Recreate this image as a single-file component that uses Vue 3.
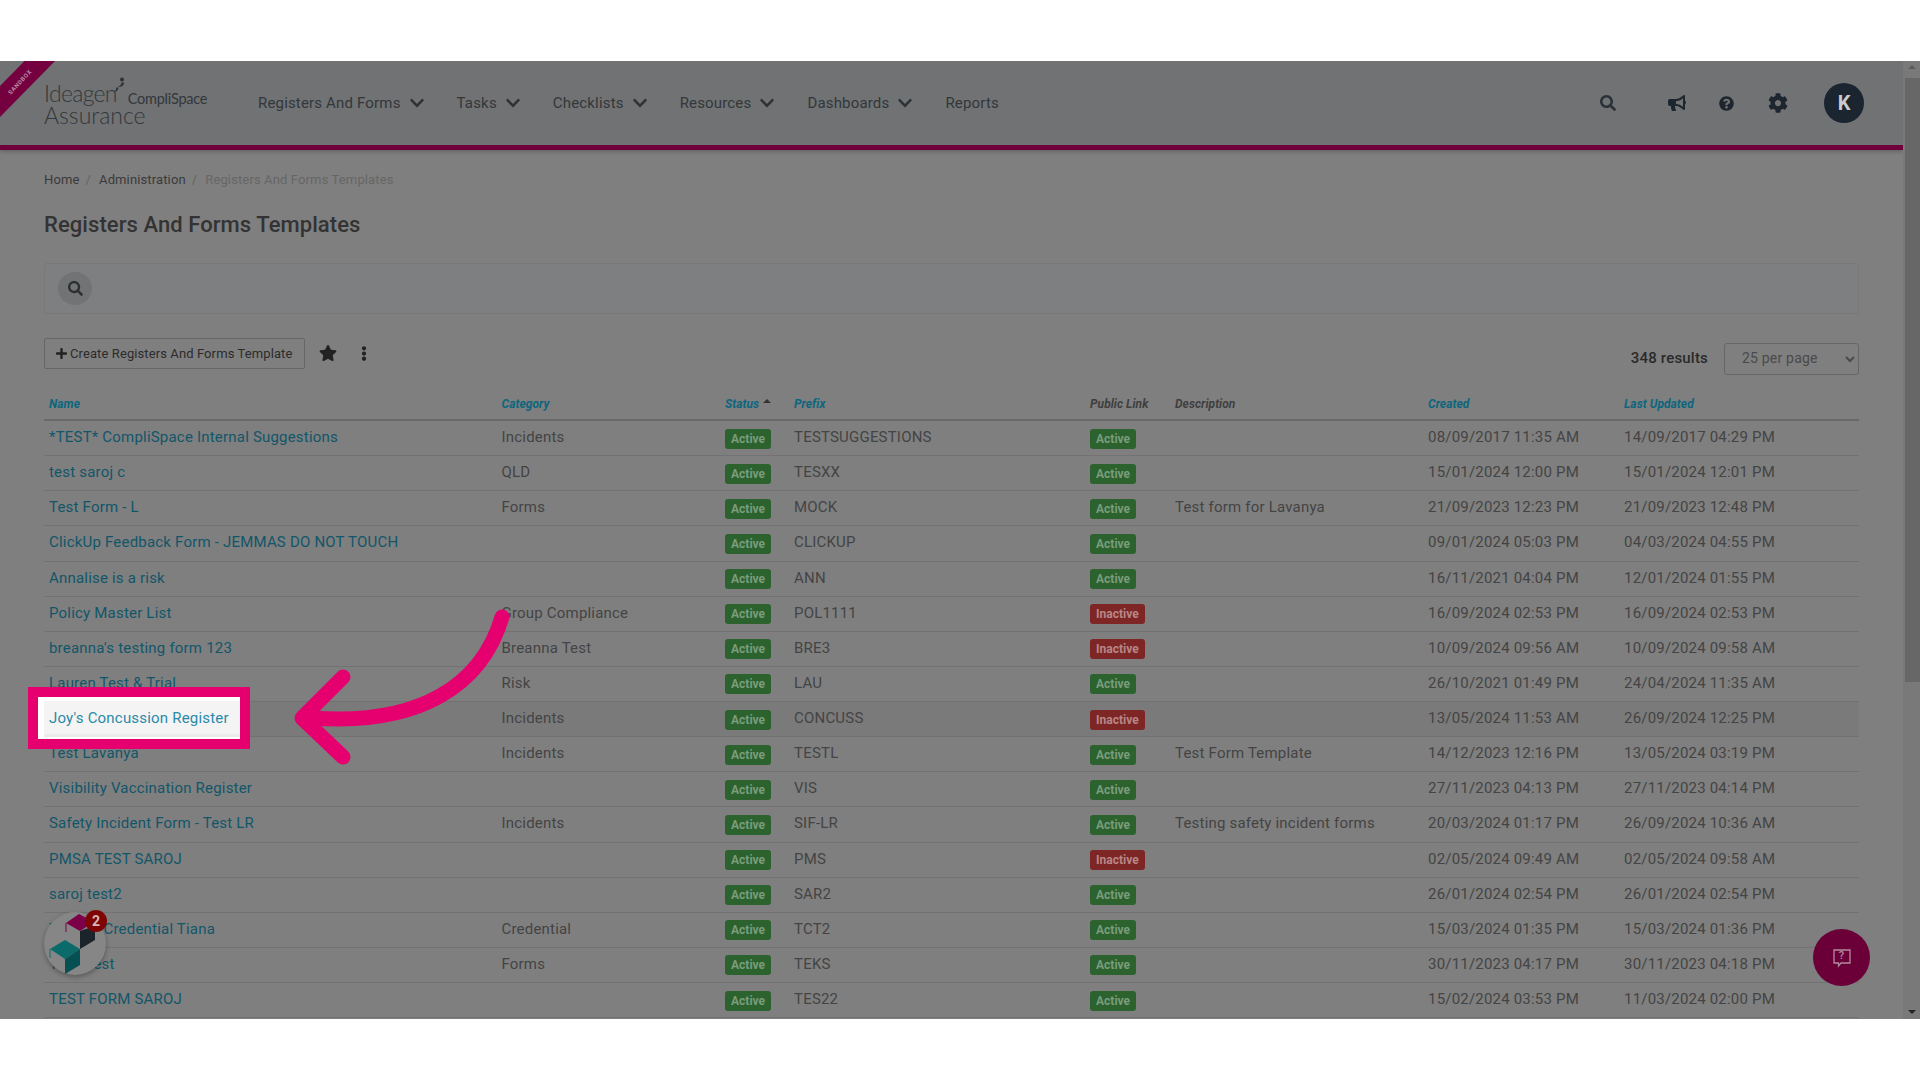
<template>
  <div class="stage">
    <div class="app">
      <div class="page">
        <header class="topbar">
          <svg class="ribbon" width="56" height="58" viewBox="0 0 56 58">
            <polygon points="24.5,0 55,0 0,56 0,25" fill="#75003f" />
            <text x="20" y="23" transform="rotate(-47 20 21)" text-anchor="middle" class="ribbon-text">SANDBOX</text>
          </svg>
          <div class="logo">
            <div class="logo-top">
              <span class="logo-ideagen">Ideagen</span>
              <svg class="logo-mark" width="12" height="16" viewBox="0 0 12 16">
                <circle cx="9" cy="2.500" r="2" fill="#2e3235" />
                <path d="M11 5.500 C11 9 8 10 5 10 C7 8.800 8.500 7.500 8.500 5.500 Z" fill="#2e3235" />
                <path d="M5.500 10.500 C5.500 13 3.500 15 1 15.500 C2.500 14 3.300 12.500 3.300 10.500 Z" fill="#2e3235" />
              </svg>
              <span class="logo-compli">CompliSpace</span>
            </div>
            <div class="logo-assurance">Assurance</div>
          </div>
          <nav class="nav">
            <a v-for="item in navItems" :key="item.label" class="nav-item">
              {{ item.label }}
              <svg v-if="item.menu" class="chev" viewBox="0 0 448 512"><path :d="icons.chevron" /></svg>
            </a>
          </nav>
          <div class="top-icons">
            <svg class="ic-search" viewBox="0 0 512 512"><path :d="icons.search" /></svg>
            <svg class="ic-horn" viewBox="0 0 576 512"><path :d="icons.bullhorn" /></svg>
            <svg class="ic-help" viewBox="0 0 512 512"><path :d="icons.question" /></svg>
            <svg class="ic-cog" viewBox="0 0 512 512"><path :d="icons.cog" /></svg>
            <div class="avatar">K</div>
          </div>
        </header>

        <main class="content">
          <div class="breadcrumb">
            <a>Home</a><span class="sep">/</span>
            <a>Administration</a><span class="sep">/</span>
            <span class="current">Registers And Forms Templates</span>
          </div>
          <h1>Registers And Forms Templates</h1>

          <div class="search-panel">
            <div class="search-btn">
              <svg viewBox="0 0 512 512"><path :d="icons.search" /></svg>
            </div>
          </div>

          <div class="toolbar">
            <button class="create-btn">
              <svg viewBox="0 0 448 512"><path :d="icons.plus" /></svg>
              Create Registers And Forms Template
            </button>
            <svg class="ic-star" viewBox="0 0 576 512"><path :d="icons.star" /></svg>
            <svg class="ic-dots" viewBox="0 0 192 512"><path :d="icons.dots" /></svg>
            <div class="results">
              <strong>348 results</strong>
              <select class="per-page">
                <option>25 per page</option>
              </select>
            </div>
          </div>

          <div class="table">
            <div class="row head">
              <a class="sort">Name</a>
              <a class="sort">Category</a>
              <a class="sort">Status<i class="caret"></i></a>
              <a class="sort">Prefix</a>
              <span>Public Link</span>
              <span>Description</span>
              <a class="sort">Created</a>
              <a class="sort">Last Updated</a>
            </div>
            <div v-for="(r, i) in rows" :key="r.prefix" class="row" :class="{ hovered: i === 8 }">
              <a class="name">{{ i === 8 ? '' : r.name }}</a>
              <span>{{ r.category }}</span>
              <div class="tag"><span class="badge">Active</span></div>
              <span>{{ r.prefix }}</span>
              <div class="tag"><span class="badge" :class="{ off: r.inactive }">{{ r.inactive ? 'Inactive' : 'Active' }}</span></div>
              <span>{{ r.description }}</span>
              <span>{{ r.created }}</span>
              <span>{{ r.updated }}</span>
            </div>
          </div>
        </main>
      </div>

      <div class="scrollbar">
        <i class="arrow up"></i>
        <div class="thumb"></div>
        <i class="arrow down"></i>
      </div>

      <div class="widget">
        <svg width="62" height="63" viewBox="0 0 62 63">
          <polygon points="22,11 35,2 50,10 36,19" fill="#7b0048" />
          <polygon points="36,19 51,14 51,28 36,37" fill="#1b232b" />
          <polygon points="6,37 21,28 36,37 21,47" fill="#0b6a6a" />
          <polygon points="21,47 36,37 36,53 21,62" fill="#064f52" />
          <path d="M22 11V20" stroke="#7b0048" />
          <path d="M6 37V46" stroke="#0b6a6a" />
        </svg>
        <span class="widget-badge">2</span>
      </div>

      <div class="help-fab">
        <svg width="20" height="20" viewBox="0 0 20 20">
          <path d="M2 2H18V15H9L6.500 18V15H2Z" fill="none" stroke="#b58aa0" stroke-width="1.300" />
        </svg>
        <span class="help-q">?</span>
      </div>

      <div class="spotlight">
        <div class="spot-row"><a>Joy's Concussion Register</a></div>
      </div>

      <svg class="pointer" width="1920" height="958" viewBox="0 61 1920 958">
        <path d="M502 617 C482 685 420 726 312 718" fill="none" stroke="#e6006f" stroke-width="15" stroke-linecap="round" />
        <path d="M343 677 L302 718 L343 757" fill="none" stroke="#e6006f" stroke-width="15" stroke-linecap="round" stroke-linejoin="round" />
      </svg>
    </div>
  </div>
</template>

<script setup>
const icons = {
  chevron: 'M207.029 381.476L12.686 187.132c-9.373-9.373-9.373-24.569 0-33.941l22.667-22.667c9.357-9.357 24.522-9.375 33.901-.04L224 284.505l154.745-154.021c9.379-9.335 24.544-9.317 33.901.04l22.667 22.667c9.373 9.373 9.373 24.569 0 33.941L240.971 381.476c-9.373 9.372-24.569 9.372-33.942 0z',
  search: 'M505 442.7L405.3 343c-4.5-4.5-10.6-7-17-7H372c27.6-35.3 44-79.7 44-128C416 93.1 322.9 0 208 0S0 93.1 0 208s93.1 208 208 208c48.3 0 92.7-16.4 128-44v16.3c0 6.4 2.5 12.5 7 17l99.7 99.7c9.4 9.4 24.6 9.4 33.9 0l28.3-28.3c9.4-9.4 9.4-24.6.1-34zM208 336c-70.7 0-128-57.2-128-128 0-70.7 57.2-128 128-128 70.7 0 128 57.2 128 128 0 70.7-57.2 128-128 128z',
  bullhorn: 'M576 240c0-23.63-12.95-44.04-32-55.12V32.01C544 23.26 537.02 0 512 0c-7.12 0-14.19 2.38-19.98 7.02l-85.03 68.03C364.28 109.19 310.66 128 256 128H64c-35.35 0-64 28.65-64 64v96c0 35.35 28.65 64 64 64h33.7c-1.39 10.48-2.18 21.14-2.18 32 0 39.77 9.26 77.35 25.56 110.94 5.19 10.69 16.52 17.06 28.4 17.06h74.28c26.05 0 41.69-29.84 25.9-50.56-16.4-21.52-26.15-48.36-26.15-77.44 0-11.11 1.62-21.79 4.41-32H256c54.66 0 108.28 18.81 150.98 52.95l85.03 68.03a32.023 32.023 0 0 0 19.98 7.02c24.92 0 32-22.78 32-32V295.13C563.05 284.04 576 263.63 576 240zm-96 141.42l-33.05-26.44C392.95 311.78 325.12 288 256 288v-96c69.12 0 136.95-23.78 190.95-66.98L480 98.58v282.84z',
  question: 'M504 256c0 136.997-111.043 248-248 248S8 392.997 8 256C8 119.083 119.043 8 256 8s248 111.083 248 248zM262.655 90c-54.497 0-89.255 22.957-116.549 63.758-3.536 5.286-2.353 12.415 2.715 16.258l34.699 26.31c5.205 3.947 12.621 3.008 16.665-2.122 17.864-22.658 30.113-35.797 57.303-35.797 20.429 0 45.698 13.148 45.698 32.958 0 14.976-12.363 22.667-32.534 33.976C247.128 238.528 216 254.941 216 296v4c0 6.627 5.373 12 12 12h56c6.627 0 12-5.373 12-12v-1.333c0-28.462 83.186-29.647 83.186-106.667 0-58.002-60.165-102-116.531-102zM256 338c-25.365 0-46 20.635-46 46 0 25.364 20.635 46 46 46s46-20.636 46-46c0-25.365-20.635-46-46-46z',
  cog: 'M487.4 315.7l-42.6-24.6c4.3-23.2 4.3-47 0-70.2l42.6-24.6c4.9-2.8 7.1-8.6 5.5-14-11.1-35.6-30-67.8-54.7-94.6-3.8-4.1-10-5.1-14.8-2.3L380.8 110c-17.9-15.4-38.5-27.3-60.8-35.1V25.8c0-5.6-3.9-10.5-9.4-11.7-36.7-8.2-74.3-7.8-109.2 0-5.5 1.2-9.4 6.1-9.4 11.7V75c-22.2 7.9-42.8 19.8-60.8 35.1L88.7 85.5c-4.9-2.8-11-1.9-14.8 2.3-24.7 26.7-43.6 58.9-54.7 94.6-1.7 5.4.6 11.2 5.5 14L67.3 221c-4.3 23.2-4.3 47 0 70.2l-42.6 24.6c-4.9 2.8-7.1 8.6-5.5 14 11.1 35.6 30 67.8 54.7 94.6 3.8 4.1 10 5.1 14.8 2.3l42.6-24.6c17.9 15.4 38.5 27.3 60.8 35.1v49.2c0 5.6 3.9 10.5 9.4 11.7 36.7 8.2 74.3 7.8 109.2 0 5.5-1.2 9.4-6.1 9.4-11.7v-49.2c22.2-7.9 42.8-19.8 60.8-35.1l42.6 24.6c4.9 2.8 11 1.9 14.8-2.3 24.7-26.7 43.6-58.9 54.7-94.6 1.5-5.5-.7-11.3-5.6-14.1zM256 336c-44.1 0-80-35.9-80-80s35.9-80 80-80 80 35.9 80 80-35.9 80-80 80z',
  star: 'M259.3 17.8L194 150.2 47.9 171.5c-26.2 3.8-36.7 36.1-17.7 54.6l105.7 103-25 145.5c-4.5 26.3 23.2 46 46.4 33.7L288 439.6l130.7 68.7c23.2 12.2 50.9-7.4 46.4-33.7l-25-145.5 105.7-103c19-18.5 8.5-50.8-17.7-54.6L382 150.2 316.7 17.8c-11.7-23.6-45.6-23.9-57.4 0z',
  dots: 'M96 184c39.8 0 72 32.2 72 72s-32.2 72-72 72-72-32.2-72-72 32.2-72 72-72zM24 80c0 39.8 32.2 72 72 72s72-32.2 72-72S135.8 8 96 8 24 40.2 24 80zm0 352c0 39.8 32.2 72 72 72s72-32.2 72-72-32.2-72-72-72-72 32.2-72 72z',
  plus: 'M416 208H272V64c0-17.67-14.33-32-32-32h-32c-17.67 0-32 14.33-32 32v144H32c-17.67 0-32 14.33-32 32v32c0 17.67 14.33 32 32 32h144v144c0 17.67 14.33 32 32 32h32c17.67 0 32-14.33 32-32V304h144c17.67 0 32-14.33 32-32v-32c0-17.67-14.33-32-32-32z',
};

const navItems = [
  { label: 'Registers And Forms', menu: true },
  { label: 'Tasks', menu: true },
  { label: 'Checklists', menu: true },
  { label: 'Resources', menu: true },
  { label: 'Dashboards', menu: true },
  { label: 'Reports', menu: false },
];

const rows = [
  { name: '*TEST* CompliSpace Internal Suggestions', category: 'Incidents', prefix: 'TESTSUGGESTIONS', description: '', created: '08/09/2017 11:35 AM', updated: '14/09/2017 04:29 PM' },
  { name: 'test saroj c', category: 'QLD', prefix: 'TESXX', description: '', created: '15/01/2024 12:00 PM', updated: '15/01/2024 12:01 PM' },
  { name: 'Test Form - L', category: 'Forms', prefix: 'MOCK', description: 'Test form for Lavanya', created: '21/09/2023 12:23 PM', updated: '21/09/2023 12:48 PM' },
  { name: 'ClickUp Feedback Form - JEMMAS DO NOT TOUCH', category: '', prefix: 'CLICKUP', description: '', created: '09/01/2024 05:03 PM', updated: '04/03/2024 04:55 PM' },
  { name: 'Annalise is a risk', category: '', prefix: 'ANN', description: '', created: '16/11/2021 04:04 PM', updated: '12/01/2024 01:55 PM' },
  { name: 'Policy Master List', category: 'Group Compliance', prefix: 'POL1111', inactive: true, description: '', created: '16/09/2024 02:53 PM', updated: '16/09/2024 02:53 PM' },
  { name: "breanna's testing form 123", category: 'Breanna Test', prefix: 'BRE3', inactive: true, description: '', created: '10/09/2024 09:56 AM', updated: '10/09/2024 09:58 AM' },
  { name: 'Lauren Test & Trial', category: 'Risk', prefix: 'LAU', description: '', created: '26/10/2021 01:49 PM', updated: '24/04/2024 11:35 AM' },
  { name: "Joy's Concussion Register", category: 'Incidents', prefix: 'CONCUSS', inactive: true, description: '', created: '13/05/2024 11:53 AM', updated: '26/09/2024 12:25 PM' },
  { name: 'Test Lavanya', category: 'Incidents', prefix: 'TESTL', description: 'Test Form Template', created: '14/12/2023 12:16 PM', updated: '13/05/2024 03:19 PM' },
  { name: 'Visibility Vaccination Register', category: '', prefix: 'VIS', description: '', created: '27/11/2023 04:13 PM', updated: '27/11/2023 04:14 PM' },
  { name: 'Safety Incident Form - Test LR', category: 'Incidents', prefix: 'SIF-LR', description: 'Testing safety incident forms', created: '20/03/2024 01:17 PM', updated: '26/09/2024 10:36 AM' },
  { name: 'PMSA TEST SAROJ', category: '', prefix: 'PMS', inactive: true, description: '', created: '02/05/2024 09:49 AM', updated: '02/05/2024 09:58 AM' },
  { name: 'saroj test2', category: '', prefix: 'SAR2', description: '', created: '26/01/2024 02:54 PM', updated: '26/01/2024 02:54 PM' },
  { name: 'Testing Credential Tiana', category: 'Credential', prefix: 'TCT2', description: '', created: '15/03/2024 01:35 PM', updated: '15/03/2024 01:36 PM' },
  { name: 'Teks Test', category: 'Forms', prefix: 'TEKS', description: '', created: '30/11/2023 04:17 PM', updated: '30/11/2023 04:18 PM' },
  { name: 'TEST FORM SAROJ', category: '', prefix: 'TES22', description: '', created: '15/02/2024 03:53 PM', updated: '11/03/2024 02:00 PM' },
];
</script>

<style scoped>
.stage {
  width: 1920px;
  height: 1080px;
  padding: 61px 0;
  box-sizing: border-box;
  background: #fff;
  font-family: Roboto, "Liberation Sans", sans-serif;
}

.app {
  position: relative;
  display: flex;
  height: 958px;
  overflow: hidden;
  background: #7f7f7f;
  color: #444;
}

.page {
  flex: 1;
  min-width: 0;
}

.topbar {
  position: relative;
  display: flex;
  align-items: center;
  height: 84px;
  padding: 0 39px 0 44px;
  background: #707274;
  border-bottom: 5px solid #6f003c;
  box-shadow: 0 2px 4px rgba(0, 0, 0, 0.2);
}

.ribbon {
  position: absolute;
  left: 0;
  top: 0;
}

.ribbon-text {
  font-size: 6px;
  font-weight: 700;
  letter-spacing: 0.6px;
  fill: #b98aa3;
}

.logo {
  position: relative;
  width: 214px;
  padding-top: 2px;
  color: #34383a;
  font-family: Lato, "Liberation Sans", sans-serif;
  font-weight: 300;
}

.logo-top {
  display: flex;
  align-items: baseline;
  height: 22px;
}

.logo-ideagen {
  font-size: 23px;
  line-height: 22px;
  letter-spacing: -0.7px;
}

.logo-mark {
  position: absolute;
  left: 69px;
  top: -3px;
}

.logo-compli {
  position: relative;
  top: 2px;
  margin-left: 11px;
  font-size: 14.500px;
  font-weight: 400;
  letter-spacing: -0.25px;
  color: #33373a;
}

.logo-assurance {
  font-size: 23px;
  line-height: 23px;
}

.nav {
  display: flex;
  align-items: center;
  gap: 33px;
}

.nav-item {
  display: flex;
  align-items: center;
  gap: 9px;
  font-size: 15px;
  letter-spacing: 0.17px;
  color: #33373a;
}

.chev {
  width: 14px;
  height: 16px;
  fill: #2e3235;
}

.top-icons {
  display: flex;
  align-items: center;
  margin-left: auto;
  fill: #1d252e;
}

.ic-search {
  width: 16px;
  height: 16px;
  fill: #2a3138;
}

.ic-horn {
  width: 18px;
  height: 16px;
  margin-left: 52px;
}

.ic-help {
  width: 15px;
  height: 15px;
  margin-left: 33px;
}

.ic-cog {
  width: 20px;
  height: 20px;
  margin-left: 34px;
}

.avatar {
  display: flex;
  align-items: center;
  justify-content: center;
  width: 40px;
  height: 40px;
  margin-left: 36px;
  border-radius: 50%;
  background: #1b2530;
  color: #c9cbcd;
  font-size: 20px;
  font-weight: 700;
}

.content {
  padding: 19px 44px 0;
}

.breadcrumb {
  display: flex;
  align-items: center;
  height: 20px;
  font-size: 13px;
  letter-spacing: 0.13px;
  color: #3a3a3a;
}

.sep {
  margin: 0 8px 0 6px;
  color: #636363;
}

.current {
  color: #666;
}

h1 {
  margin: 21px 0 0;
  font-size: 22px;
  line-height: 30px;
  font-weight: 500;
  letter-spacing: 0.07px;
  color: #333;
}

.search-panel {
  display: flex;
  align-items: center;
  height: 51px;
  margin-top: 23px;
  padding: 0 13px;
  box-sizing: border-box;
  background: #7d7f80;
  border: 1px solid #75797c;
  border-radius: 3px;
}

.search-btn {
  display: flex;
  align-items: center;
  justify-content: center;
  width: 34px;
  height: 33px;
  border-radius: 50%;
  background: #727374;
}

.search-btn svg {
  width: 15px;
  height: 15px;
  fill: #2c3033;
}

.toolbar {
  display: flex;
  align-items: flex-start;
  height: 37px;
  margin-top: 24px;
}

.create-btn {
  display: flex;
  align-items: center;
  gap: 3px;
  width: 261px;
  height: 31px;
  padding: 0 0 0 11px;
  border: 1px solid #666;
  border-radius: 2px;
  background: #7f7f7f;
  color: #2b2b2b;
  font: 13px Roboto, "Liberation Sans", sans-serif;
  letter-spacing: 0.1px;
}

.create-btn svg {
  width: 11px;
  height: 13px;
  fill: #222;
}

.ic-star {
  width: 18px;
  height: 16px;
  margin: 7px 0 0 14px;
  fill: #222;
}

.ic-dots {
  width: 6px;
  height: 15px;
  margin: 8px 0 0 24px;
  fill: #222;
}

.results {
  display: flex;
  align-items: center;
  gap: 16px;
  height: 32px;
  margin: 5px 0 0 auto;
  font-size: 15px;
  letter-spacing: 0.2px;
  color: #2a2a2a;
}

.results strong {
  position: relative;
  top: -1px;
  font-weight: 500;
}

.per-page {
  width: 135px;
  height: 32px;
  padding: 0 13px 2px;
  border: 1px solid #666;
  border-radius: 3px;
  background: #7f7f7f;
  color: #4a4a4a;
  font: 14px Roboto, "Liberation Sans", sans-serif;
  letter-spacing: 0.2px;
}

.table {
  margin-top: 10px;
}

.row {
  display: grid;
  grid-template-columns: 452.500px 223.500px 69px 296px 85px 253px 196px 240px;
  align-items: center;
  height: 35.125px;
  box-sizing: border-box;
  border-bottom: 1px solid #727272;
  font-size: 15px;
  letter-spacing: 0.2px;
}

.row > * {
  padding-left: 5px;
}

.row > span,
.row > a {
  padding-bottom: 2px;
}

.row > .tag {
  padding-top: 1px;
}

.row.hovered {
  background: #7a7a7a;
}

.row.head {
  height: 36px;
  padding-top: 5px;
  border-bottom: 2px solid #696969;
  font-size: 12px;
  font-weight: 700;
  font-style: italic;
  color: #3f3f3f;
  letter-spacing: 0.05px;
}

.sort {
  color: #0c667e;
}

.caret {
  display: inline-block;
  margin: 0 0 5px 4px;
  border: 4px solid transparent;
  border-top: 0;
  border-bottom-color: #333;
}

.name {
  color: #125669;
}

.badge {
  display: inline-block;
  height: 20px;
  padding: 0 6px;
  line-height: 20px;
  border-radius: 3px;
  background: #2b622e;
  color: #7a9c7c;
  font-size: 12px;
  font-weight: 700;
  letter-spacing: 0;
}

.badge.off {
  background: #7e2626;
  color: #b88686;
}

.scrollbar {
  position: relative;
  width: 17px;
  background: #797979;
}

.thumb {
  position: absolute;
  left: 2px;
  right: 0;
  top: 17px;
  height: 604px;
  background: #676767;
}

.arrow {
  position: absolute;
  left: 5px;
  border: 4px solid transparent;
}

.arrow.up {
  top: 4px;
  border-top: 0;
  border-bottom-color: #5a5a5a;
}

.arrow.down {
  bottom: 5px;
  border-bottom: 0;
  border-top-color: #222;
}

.widget {
  position: absolute;
  left: 44px;
  top: 851px;
  width: 62px;
  height: 63px;
  border-radius: 50%;
  background: #868686;
  box-shadow: 0 2px 5px rgba(0, 0, 0, 0.3);
}

.widget-badge {
  position: absolute;
  left: 41px;
  top: -2px;
  width: 22px;
  height: 22px;
  border-radius: 50%;
  background: #7f0505;
  color: #d8b6b6;
  font-size: 14px;
  font-weight: 700;
  line-height: 22px;
  text-align: center;
}

.help-fab {
  position: absolute;
  left: 1813px;
  top: 868px;
  width: 57px;
  height: 57px;
  display: flex;
  align-items: center;
  justify-content: center;
  border-radius: 50%;
  background: #6b0038;
}

.help-q {
  position: absolute;
  left: 0;
  right: 0;
  top: 20px;
  text-align: center;
  color: #b58aa0;
  font-size: 11px;
  font-weight: 500;
}

.spotlight {
  position: absolute;
  left: 28px;
  top: 626px;
  width: 222px;
  height: 62px;
  box-sizing: border-box;
  padding: 4px 0 0 6px;
  border: 10px solid #e6006f;
  background: #fff;
}

.spot-row {
  height: 36px;
  box-sizing: border-box;
  padding: 0 0 0 5px;
  display: flex;
  align-items: center;
  background: #f4f4f4;
  border-bottom: 3px solid #ebebeb;
  color: #2a8aa8;
  font-size: 15px;
  letter-spacing: 0.2px;
}

.pointer {
  position: absolute;
  left: 0;
  top: 0;
  pointer-events: none;
}
</style>
